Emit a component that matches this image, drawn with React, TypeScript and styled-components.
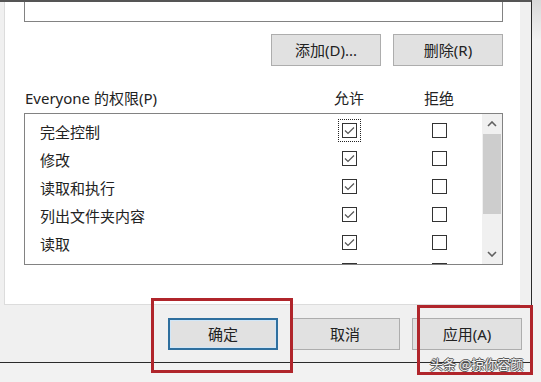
import React from 'react'
import styled, { createGlobalStyle } from 'styled-components'

const GlobalStyle = createGlobalStyle`
  html, body {
    margin: 0;
    padding: 0;
    background: #ececec;
    overflow: hidden;
  }
  body {
    font-family: "Noto Sans", "Noto Sans CJK SC", sans-serif;
    color: #222;
  }
`

const Screen = styled.div`
  position: relative;
  width: 541px;
  height: 382px;
  background: linear-gradient(#d9d9d9, #f2f2f2 40px);
  overflow: hidden;
`

const Dialog = styled.div`
  width: 532px;
  height: 363px;
  display: flex;
  flex-direction: column;
  background: #f0f0f0;
  border-top: 2px solid #555;
  border-right: 1px solid #2b2b2b;
  border-bottom: 1px solid #2b2b2b;
  box-sizing: border-box;
  padding-left: 4px;
  padding-right: 11px;
`

const TabPage = styled.div`
  height: 303px;
  flex: none;
  background: #fff;
  border-left: 1px solid #dcdcdc;
  border-bottom: 1px solid #dcdcdc;
  box-sizing: border-box;
  padding: 0 17px 0 19px;
  display: flex;
  flex-direction: column;
`

const UserList = styled.div`
  height: 20px;
  border: 1px solid #828282;
  border-top: none;
  box-sizing: border-box;
`

const ButtonRow = styled.div`
  display: flex;
  justify-content: flex-end;
  gap: 12px;
  margin-top: 12px;
`

const Button = styled.button<{ $default?: boolean }>`
  width: 110px;
  height: 32px;
  box-sizing: border-box;
  background: #e1e1e1;
  border: ${p => (p.$default ? '2px solid #2f6f9e' : '1px solid #adadad')};
  box-shadow: ${p => (p.$default ? 'inset 0 0 0 1px #cfe6f8' : 'none')};
  font-family: "Noto Sans", "Noto Sans CJK SC", sans-serif;
  font-size: 15px;
  line-height: 20px;
  color: #222;
  padding: 0;
  cursor: default;
`

const Grid = styled.div`
  display: grid;
  grid-template-columns: 1fr 60px 60px;
  column-gap: 30px;
  align-items: center;
`

const Header = styled(Grid)`
  margin-top: 21px;
  height: 22px;
  line-height: 22px;
  font-size: 15px;
  padding: 0 34px 0 1px;
`

const ColTitle = styled.div`
  text-align: center;
`

const PermBox = styled.div`
  margin-top: 4px;
  height: 152px;
  border: 1px solid #828282;
  box-sizing: border-box;
  display: flex;
  overflow: hidden;
`

const Rows = styled.div`
  flex: 1;
  padding: 3px 13px 0 0;
  overflow: hidden;
`

const Row = styled(Grid)`
  height: 28px;
  font-size: 15px;
`

const Name = styled.div`
  padding-left: 15px;
  white-space: nowrap;
`

const Cell = styled.div`
  display: flex;
  justify-content: center;
`

const Box = styled.span<{ $focus?: boolean }>`
  width: 15px;
  height: 15px;
  box-sizing: border-box;
  border: 1px solid #333;
  background: #fff;
  display: flex;
  align-items: center;
  justify-content: center;
  margin-top: -2px;
  outline: ${p => (p.$focus ? '1px dotted #222' : 'none')};
  outline-offset: 3px;
`

const Scrollbar = styled.div`
  width: 20px;
  flex: none;
  background: #f0f0f0;
  display: flex;
  flex-direction: column;
`

const Arrow = styled.div`
  height: 20px;
  display: flex;
  align-items: center;
  justify-content: center;
`

const Thumb = styled.div`
  height: 80px;
  margin: 0 1px;
  background: #cdcdcd;
`

const Track = styled.div`
  flex: 1;
`

const Footer = styled.div`
  flex: 1;
  display: flex;
  justify-content: flex-end;
  align-items: center;
  gap: 12px;
  margin-right: -2px;
`

const Mark = styled.div<{ $x: number; $y: number; $w: number; $h: number }>`
  position: absolute;
  left: ${p => p.$x}px;
  top: ${p => p.$y}px;
  width: ${p => p.$w}px;
  height: ${p => p.$h}px;
  border: 3px solid #b0252b;
  box-sizing: border-box;
  pointer-events: none;
`

const Watermark = styled.div`
  position: absolute;
  left: 430px;
  top: 355px;
  font-family: "Noto Sans CJK SC", sans-serif;
  font-size: 13px;
  line-height: 18px;
  color: #f4f4f4;
  text-shadow: 1px 0 0 #555, -1px 0 0 #555, 0 1px 0 #555, 0 -1px 0 #555;
  white-space: nowrap;
`

const Check = () => (
  <svg width="11" height="9" viewBox="0 0 11 9">
    <path d="M1 4.5 L4 7.5 L10 1.5" fill="none" stroke="#555" strokeWidth="1.2" />
  </svg>
)

const Chevron = ({ up }: { up?: boolean }) => (
  <svg width="10" height="6" viewBox="0 0 10 6">
    <path
      d={up ? 'M1 5 L5 1 L9 5' : 'M1 1 L5 5 L9 1'}
      fill="none"
      stroke="#606060"
      strokeWidth="1.6"
    />
  </svg>
)

// last row is scrolled mostly out of view: only the tops of its boxes show
const perms = ['完全控制', '修改', '读取和执行', '列出文件夹内容', '读取', '']

export default function App() {
  return (
    <Screen>
      <GlobalStyle />
      <Dialog>
        <TabPage>
          <UserList />
          <ButtonRow>
            <Button>添加(D)...</Button>
            <Button>删除(R)</Button>
          </ButtonRow>
          <Header>
            <div>Everyone 的权限(P)</div>
            <ColTitle>允许</ColTitle>
            <ColTitle>拒绝</ColTitle>
          </Header>
          <PermBox>
            <Rows>
              {perms.map((p, i) => (
                <Row key={i}>
                  <Name>{p}</Name>
                  <Cell>
                    <Box $focus={i === 0}>
                      <Check />
                    </Box>
                  </Cell>
                  <Cell>
                    <Box />
                  </Cell>
                </Row>
              ))}
            </Rows>
            <Scrollbar>
              <Arrow>
                <Chevron up />
              </Arrow>
              <Thumb />
              <Track />
              <Arrow>
                <Chevron />
              </Arrow>
            </Scrollbar>
          </PermBox>
        </TabPage>
        <Footer>
          <Button $default>确定</Button>
          <Button>取消</Button>
          <Button>应用(A)</Button>
        </Footer>
      </Dialog>
      <Mark $x={151} $y={298} $w={142} $h={75} />
      <Mark $x={417} $y={305} $w={116} $h={70} />
      <Watermark>头条 @掠你容颜</Watermark>
    </Screen>
  )
}
